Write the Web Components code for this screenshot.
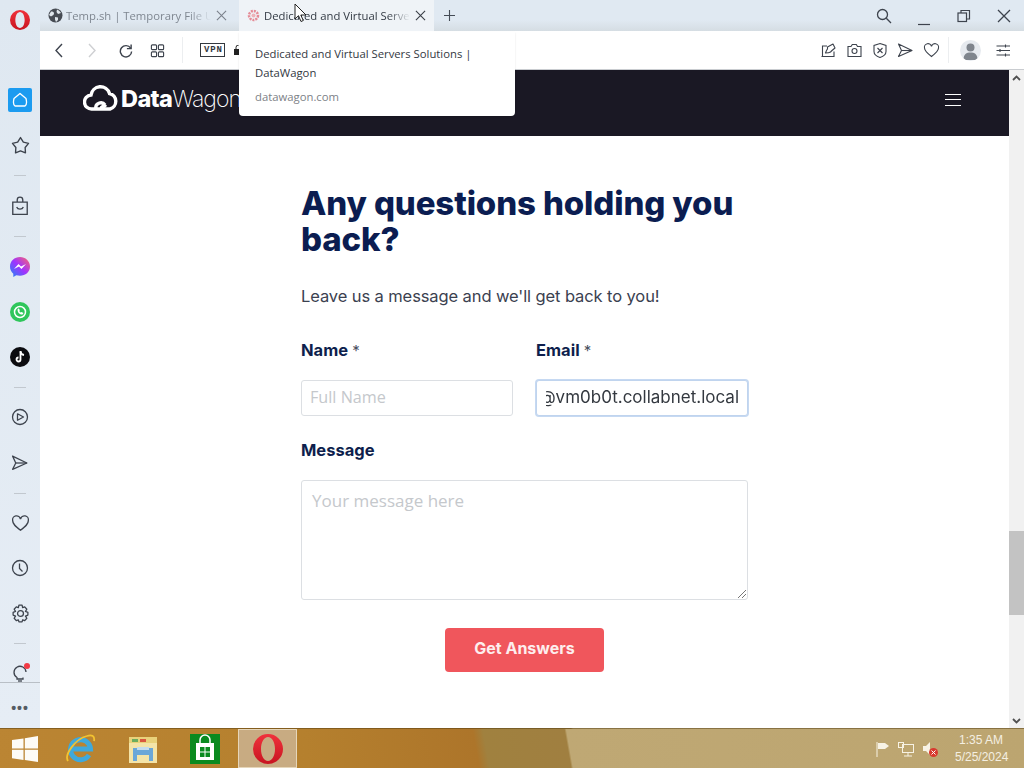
<!DOCTYPE html>
<html>
<head>
<meta charset="utf-8">
<title>DataWagon</title>
<style>
  html, body { margin: 0; height: 100%; overflow: hidden; font-family: "Open Sans", sans-serif; }
</style>
</head>
<body>
<browser-window></browser-window>

<script>
// small helper so every component gets an open shadow root the same way
class Base extends HTMLElement {
  constructor() {
    super();
    this.shadowDOM = this.attachShadow({ mode: "open" });
  }
  connectedCallback() {
    this.render();
  }
}

const ICONS = {
  back: `<path d="M10 2 4 8.500 10 15"/>`,
  forward: `<path d="M5 2l6 6.500L5 15"/>`,
  reload: `<path d="M13.500 5.500A6 6 0 1 0 14.500 9"/><path d="M14 1.500v4.500H9.500" />`,
  tabs: `<rect x="1.500" y="2" width="5.500" height="5" rx="1"/><rect x="9" y="2" width="5.500" height="5" rx="1"/><rect x="1.500" y="9.500" width="5.500" height="5" rx="1"/><rect x="9" y="9.500" width="5.500" height="5" rx="1"/>`,
  snap: `<path d="M7 4H2.500v10.500"/><path d="M14 9.500v5H1.500"/><path d="M5.500 11c.6-1.800 1-3 2-4.200L7.500 5 13 2l2 4-3 2.500-1.500 1.500C9 11 7.500 11 5.500 11z" stroke-linejoin="round"/>`,
  camera: `<path d="M2 4.500h3l1.300-2h4L11.500 4.500H15v10H2z"/><circle cx="8.500" cy="9" r="2.500"/>`,
  shield: `<path d="M8 1.500 14 3.500v6c0 3-3 5-6 6-3-1-6-3-6-6v-6z"/><path d="M5.500 6 10.500 11M10.500 6 5.500 11"/>`,
  send: `<path d="M1.500 2 15 8.500 1.500 14.500 4.500 8.500z" stroke-linejoin="round"/><path d="M4.500 8.500H15"/>`,
  heart: `<path d="M8.500 14.500C4 11 1.500 9 1.500 6A3.500 3.500 0 0 1 8.500 4.500 3.500 3.500 0 0 1 15.500 6c0 3-2.500 5-7 8.500z"/>`,
  easy: `<path d="M1.500 4H15M1.500 8.500H15M1.500 13H15"/><path d="M10.500 2.500v3M5 7v3M10.500 11.500v3"/>`,
  star: `<path d="M9 1.500 11.700 5.800 16.600 7 13.400 10.900 13.700 16 9 14.100 4.300 16 4.600 10.900 1.400 7 6.300 5.800z" stroke-linejoin="round"/>`,
  bag: `<path d="M2.500 5.500h13v11h-13z"/><path d="M6.500 5.500V3.500a2.500 2.500 0 0 1 5 0v2"/><path d="M6 10c1 2.500 5 2.500 6 0"/>`,
  play: `<circle cx="9" cy="9" r="7.500"/><path d="M6.500 5.800 12.500 9 6.500 12.200z" stroke-linejoin="round"/>`,
  clock: `<circle cx="9" cy="9" r="7.500"/><path d="M8.500 4.500V9.500l3 3"/>`,
  gear: `<path d="M7.500 1.500h3l.5 2.500 2-.8 2 2.300-1.300 2 2.300 1v2.500l-2.300 1 1.300 2-2 2.300-2-.8-.5 2h-3l-.5-2-2 .8-2-2.300 1.300-2-2.300-1V8.500l2.300-1-1.300-2 2-2.300 2 .8z" transform="translate(0 -.5)" stroke-linejoin="round"/><circle cx="9" cy="9" r="2.800"/>`,
  bulb: `<path d="M15 8A6 6 0 1 0 6 13.500V15h6v-1.500"/><path d="M7 17h4"/>`
};

function icon(name, size, view, width) {
  return `<svg width="${size}" height="${size}" viewBox="0 0 ${view} ${view}" fill="none" stroke="#3d434d" stroke-width="${width || 1.200}">${ICONS[name]}</svg>`;
}

// the opera "O": a round face with a tall narrow counter
function operaMark(size, id) {
  return `<svg width="${size}" height="${size}" viewBox="0 0 30 30">
    <defs><linearGradient id="${id}" x1="0" y1="0" x2="0" y2="1"><stop offset="0" stop-color="#f0323c"/><stop offset="1" stop-color="#c81420"/></linearGradient></defs>
    <path fill="url(#${id})" fill-rule="evenodd" d="M15 0a15 15 0 1 0 0 30 15 15 0 1 0 0-30zM15 3c4 0 7 5.400 7 12s-3 12-7 12-7-5.400-7-12 3-12 7-12z"/>
  </svg>`;
}

class OperaTab extends Base {
  render() {
    const active = this.hasAttribute("active");
    this.shadowDOM.innerHTML = `
      <style>
        :host {
          display: flex;
          align-items: center;
          width: 194px;
          height: 31px;
          box-sizing: border-box;
          padding: 0 8px 1px 7px;
          background: ${active ? "#eff3f7" : "transparent"};
          font-size: 11.300px;
          color: ${active ? "#333a44" : "#7f8791"};
        }
        .fav { flex: none; width: 15px; height: 15px; margin-right: 3px; }
        .label {
          flex: 1;
          min-width: 0;
          white-space: nowrap;
          overflow: hidden;
          -webkit-mask-image: linear-gradient(90deg, #000 85%, transparent);
          mask-image: linear-gradient(90deg, #000 85%, transparent);
        }
        .close { flex: none; width: 11px; height: 11px; margin-left: 5px; }
      </style>
      <span class="fav"><slot name="fav"></slot></span>
      <span class="label"><slot></slot></span>
      <svg class="close" viewBox="0 0 12 12" fill="none" stroke="${active ? "#3a3f47" : "#7b828c"}" stroke-width="1.200"><path d="M1 1l10 10M11 1 1 11"/></svg>
    `;
  }
}
customElements.define("opera-tab", OperaTab);

class TabStrip extends Base {
  render() {
    this.shadowDOM.innerHTML = `
      <style>
        :host {
          display: flex;
          align-items: stretch;
          height: 31px;
          padding-left: 1px;
          background: linear-gradient(#e0e9f2 65%, #d5dde3);
        }
        opera-tab[active] { margin-left: 4px; width: 195px; }
        .plus { width: 30px; display: flex; align-items: center; justify-content: center; }
        .spacer { flex: 1; }
        .ctl { display: flex; align-items: center; }
        .ctl svg { display: block; }
        .ctl span { display: flex; width: 40px; justify-content: center; }
      </style>
      <opera-tab>
        <svg slot="fav" width="15" height="15" viewBox="0 0 15 15"><circle cx="7.500" cy="7.500" r="7" fill="#474c54"/><path d="M3 3.500c2 0 3 .5 3 2s-1.500 2-3 3L1 7zM9 1.500c2 1 3 2 4 3.500l-3 1-1.500-2zM7 9l3 .5 0 2.500-2 2-1-2.500z" fill="#dfe6ec"/></svg>
        Temp.sh | Temporary File Upload
      </opera-tab>
      <opera-tab active>
        <svg slot="fav" width="15" height="15" viewBox="0 0 15 15"><circle cx="7.500" cy="7.500" r="4.500" fill="none" stroke="#e58b96" stroke-width="2.500" stroke-dasharray="2 1"/><circle cx="7.500" cy="7.500" r="2" fill="#eeb2b8"/></svg>
        Dedicated and Virtual Servers Solutions
      </opera-tab>
      <div class="plus">
        <svg width="13" height="13" viewBox="0 0 13 13" stroke="#444b55" stroke-width="1.100"><path d="M6.500 1v11M1 6.500h11"/></svg>
      </div>
      <div class="spacer"></div>
      <div class="ctl">
        <span><svg width="16" height="16" viewBox="0 0 16 16" fill="none" stroke="#3d434d" stroke-width="1.300"><circle cx="6.500" cy="6.500" r="5"/><path d="M10.300 10.300 15 15"/></svg></span>
        <span><svg width="14" height="14" viewBox="0 0 14 14" stroke="#3d434d" stroke-width="1.200" style="margin-top:6px"><path d="M1 12.500h12"/></svg></span>
        <span><svg width="14" height="14" viewBox="0 0 14 14" fill="none" stroke="#3d434d" stroke-width="1.200"><rect x="1" y="4" width="8.500" height="8.500"/><path d="M4 4V1.500h8.500V10H9.500"/></svg></span>
        <span><svg width="14" height="14" viewBox="0 0 14 14" stroke="#3d434d" stroke-width="1.300"><path d="M1 1l12 12M13 1 1 13"/></svg></span>
      </div>
    `;
  }
}
customElements.define("tab-strip", TabStrip);

class ToolBar extends Base {
  render() {
    this.shadowDOM.innerHTML = `
      <style>
        :host {
          display: flex;
          align-items: center;
          height: 39px;
          box-sizing: border-box;
          background: #fff;
          border-bottom: 1px solid #c9ccd0;
          padding-left: 12px;
        }
        .nav { display: flex; align-items: center; width: 130px; }
        .nav span { display: flex; width: 33.500px; }
        .nav span.sm { padding-left: 1px; width: 32.500px; }
        .sep { width: 1px; height: 26px; background: #eceef0; flex: none; }
        .vpn {
          font: 700 9px/1 "Liberation Mono", monospace;
          letter-spacing: .8px;
          color: #33383f;
          border: 1px solid #33383f;
          padding: 2px 1px 1px 3px;
          margin-left: 17px;
        }
        .lock { width: 9px; height: 10px; margin-left: 9px; }
        .spacer { flex: 1; }
        .tools { display: flex; align-items: center; gap: 9px; margin-right: 8px; }
        .tools svg { display: block; }
        .avatar { width: 21px; height: 21px; border-radius: 50%; background: #e6eaef; overflow: hidden; display: block; margin: 0 14px 0 11px; }
      </style>
      <div class="nav">
        <span>${icon("back", 17, 17, 1.400)}</span>
        <span style="opacity:.25">${icon("forward", 17, 17, 1.400)}</span>
        <span class="sm">${icon("reload", 15, 16, 1.500)}</span>
        <span class="sm">${icon("tabs", 15, 16, 1.200)}</span>
      </div>
      <div class="sep"></div>
      <span class="vpn">VPN</span>
      <svg class="lock" viewBox="0 0 9 10"><path d="M0 4h9v6H0z" fill="#222"/><path d="M2 4V2.500a2.500 2.500 0 0 1 5 0V4" fill="none" stroke="#222"/></svg>
      <div class="spacer"></div>
      <div class="tools">
        ${icon("snap", 17, 17, 1.100)}
        ${icon("camera", 17, 17, 1.100)}
        ${icon("shield", 16, 16, 1.100)}
        ${icon("send", 17, 17, 1.100)}
        ${icon("heart", 17, 17, 1.100)}
      </div>
      <div class="sep"></div>
      <svg class="avatar" viewBox="0 0 21 21"><circle cx="10.500" cy="7.500" r="4" fill="#7f858d"/><path d="M3.500 20c0-6 3-7.500 7-7.500s7 1.500 7 7.500z" fill="#7f858d"/></svg>
      <div style="margin-right:13px;display:flex">${icon("easy", 16, 16, 1.100)}</div>
    `;
  }
}
customElements.define("tool-bar", ToolBar);

class SideRail extends Base {
  render() {
    const dash = `<div class="gap"><i></i></div>`;
    this.shadowDOM.innerHTML = `
      <style>
        :host {
          display: flex;
          flex-direction: column;
          align-items: center;
          width: 40px;
          flex: none;
          background: linear-gradient(#dfe8f1, #e6edf5);
        }
        .logo { height: 88px; padding-top: 10px; box-sizing: border-box; }
        .home {
          width: 24px; height: 24px; background: #1b9bf0; border-radius: 2px;
          display: flex; align-items: center; justify-content: center;
        }
        .it { height: 24px; width: 24px; display: flex; align-items: center; justify-content: center; flex: none; }
        .far { margin-top: 21px; }
        .gap { height: 36px; display: flex; align-items: center; flex: none; }
        .gap i { display: block; width: 12px; height: 1px; background: #c2c8cf; }
        svg { display: block; }
        .bulb { position: relative; }
        .dot { position: absolute; width: 6px; height: 6px; background: #f23a45; border-radius: 50%; top: 2px; right: 2px; }
        .line { align-self: stretch; height: 1px; background: #b9bfc6; margin-top: -3px; position: relative; }
        .more { color: #555b63; font: 700 14px/1 "Liberation Sans", sans-serif; letter-spacing: 1px; margin-top: 13px; }
      </style>
      <div class="logo">${operaMark(20, "railO")}</div>
      <div class="home"><svg width="16" height="16" viewBox="0 0 16 16" fill="none" stroke="#fff" stroke-width="1.300"><path d="M8 1.500 14 6.500c1 4 .5 6.500-1 7.500H3c-1.500-1-2-3.500-1-7.500z" stroke-linejoin="round"/></svg></div>
      <div class="it far">${icon("star", 19, 18, 1.300)}</div>
      ${dash}
      <div class="it" style="margin-top:1px">${icon("bag", 20, 18, 1.200)}</div>
      ${dash}
      <div class="it" style="margin-top:1px">
        <svg width="20" height="20" viewBox="0 0 20 20"><defs><linearGradient id="m" x1="0" y1="1" x2="1" y2="0"><stop offset="0" stop-color="#1e88f5"/><stop offset=".5" stop-color="#a033ff"/><stop offset="1" stop-color="#ff6968"/></linearGradient></defs><path d="M10 0C4.500 0 0 4 0 9.500c0 3 1.200 5.500 3.300 7.200V20l3-1.700c1.200.3 2.400.5 3.700.5 5.500 0 10-4 10-9.300S15.500 0 10 0z" fill="url(#m)"/><path d="M4 12l4.500-5 2.500 2.500L16 7l-4.500 5L9 9.500z" fill="#fff"/></svg>
      </div>
      <div class="it far">
        <svg width="20" height="20" viewBox="0 0 20 20"><circle cx="10" cy="10" r="10" fill="#2fc65b"/><circle cx="10" cy="10" r="5.500" fill="none" stroke="#fff" stroke-width="1.500"/><path d="M7.500 7.500c0 3 2 5 5 5l1-1.500-2-1-1 .5-1.200-1.200.5-1-1-2z" fill="#fff"/></svg>
      </div>
      <div class="it far">
        <svg width="20" height="20" viewBox="0 0 20 20"><circle cx="10" cy="10" r="10" fill="#0c0c10"/><path d="M10.500 4v8.500a2 2 0 1 1-2-2" fill="none" stroke="#fff" stroke-width="1.800"/><path d="M10.500 4.500c.3 2 1.500 3.200 3.500 3.500" fill="none" stroke="#fff" stroke-width="1.800"/></svg>
      </div>
      ${dash}
      <div class="it">${icon("play", 18, 18, 1.300)}</div>
      <div class="it" style="margin-top:22px">${icon("send", 18, 17, 1.200)}</div>
      ${dash}
      <div class="it">${icon("heart", 19, 17, 1.200)}</div>
      <div class="it far">${icon("clock", 18, 18, 1.300)}</div>
      <div class="it far">${icon("gear", 19, 18, 1.200)}</div>
      ${dash}
      <div class="it bulb">${icon("bulb", 18, 18, 1.300)}<i class="dot"></i></div>
      <div class="line"></div>
      <div class="it more">•••</div>
    `;
  }
}
customElements.define("side-rail", SideRail);

class SiteHeader extends Base {
  render() {
    this.shadowDOM.innerHTML = `
      <style>
        :host {
          display: flex;
          align-items: center;
          justify-content: space-between;
          height: 66px;
          background: #1a1824;
          padding: 0 48px 0 43px;
          color: #fff;
        }
        .brand { display: flex; align-items: center; gap: 2px; margin-top: -10px; font-family: Inter, sans-serif; white-space: nowrap; }
        b { font-size: 23.500px; font-weight: 800; letter-spacing: -.6px; }
        .thin { font-size: 23px; font-weight: 200; letter-spacing: -1px; }
        .burger { width: 16px; height: 10px; border-top: 1px solid #fff; border-bottom: 1px solid #fff; position: relative; margin-top: -6px; }
        .burger::after { content: ""; position: absolute; left: 0; right: 0; top: 4px; height: 1px; background: #fff; }
      </style>
      <div class="brand">
        <svg width="36" height="28" viewBox="0 0 36 28" fill="none" stroke="#fff" stroke-width="3.400"><path d="M9 25a7 7 0 0 1-1-14 9.500 9.500 0 0 1 18.500-1.500A8 8 0 0 1 27 25z"/><path d="M13 25a5 5 0 0 1 9-4M18 25a3 3 0 0 1 5-2"/></svg>
        <span><b>Data</b><span class="thin">Wagon</span></span>
      </div>
      <div class="burger"></div>
    `;
  }
}
customElements.define("site-header", SiteHeader);

class FormField extends Base {
  render() {
    const required = this.hasAttribute("required") ? `<span class="req"> *</span>` : "";
    this.shadowDOM.innerHTML = `
      <style>
        :host { display: flex; flex-direction: column; font-family: Inter, sans-serif; min-width: 0; }
        label { height: 20px; font-size: 16.500px; line-height: 20px; font-weight: 700; color: #0e1f4d; margin-bottom: 20px; }
        .req { font-weight: 400; font-size: 15px; color: #4a5060; }
      </style>
      <label>${this.getAttribute("label")}${required}</label>
      <slot></slot>
    `;
  }
}
customElements.define("form-field", FormField);

class TextBox extends Base {
  render() {
    const focused = this.hasAttribute("focused");
    const multi = this.hasAttribute("multi");
    const value = this.getAttribute("value");
    this.shadowDOM.innerHTML = `
      <style>
        :host {
          display: flex;
          align-items: ${multi ? "flex-start" : "center"};
          justify-content: ${focused ? "flex-end" : "flex-start"};
          box-sizing: border-box;
          height: ${this.getAttribute("h") || 36}px;
          padding: ${multi ? "10px" : "0 8px 2px"};
          border: 1px solid #dcdfe3;
          border-radius: 3px;
          background: #fff;
          font: ${multi ? "17px" : "16.200px"}/20px "Open Sans", sans-serif;
          position: relative;
          white-space: nowrap;
          ${focused ? "border-color:#c0d4ee; box-shadow: 0 0 0 1px #c6d9f2;" : ""}
        }
        .ph { color: #c5c8cc; }
        /* the caret has scrolled the address left, so only part of the @ still shows */
        .val {
          color: #33383f;
          font-family: Inter, sans-serif;
          font-size: 17px;
          -webkit-mask-image: linear-gradient(90deg, transparent 7px, #000 7px);
          mask-image: linear-gradient(90deg, transparent 7px, #000 7px);
        }
        svg { position: absolute; right: 1px; bottom: 1px; }
      </style>
      ${value ? `<span class="val">${value}</span>` : `<span class="ph">${this.getAttribute("placeholder")}</span>`}
      ${multi ? `<svg width="8" height="8" viewBox="0 0 8 8" stroke="#777"><path d="M0 8l8-8M4 8l4-4"/></svg>` : ""}
    `;
  }
}
customElements.define("text-box", TextBox);

class ContactForm extends Base {
  render() {
    this.shadowDOM.innerHTML = `
      <style>
        :host { display: block; width: 447px; margin-left: 261px; padding-top: 49px; font-family: Inter, sans-serif; }
        h2 { margin: 0; font-size: 33px; line-height: 36px; font-weight: 800; letter-spacing: -.12px; color: #0b1d51; }
        p { margin: 26px 0 0; font-size: 16.500px; letter-spacing: -.1px; line-height: 26px; color: #3b4150; }
        .row { display: grid; grid-template-columns: 212px 212px; gap: 23px; margin-top: 31px; }
        .msg { margin-top: 24px; }
        .btn {
          display: block;
          width: 159px; height: 44px;
          margin: 28px auto 0;
          border-radius: 4px;
          background: #f0565c;
          color: #fdeeee;
          font: 700 16px/40px Inter, sans-serif;
          text-align: center;
        }
      </style>
      <h2>Any questions holding you back?</h2>
      <p>Leave us a message and we'll get back to you!</p>
      <div class="row">
        <form-field label="Name" required><text-box placeholder="Full Name"></text-box></form-field>
        <form-field label="Email" required><text-box focused value="@vm0b0t.collabnet.local"></text-box></form-field>
      </div>
      <form-field class="msg" label="Message"><text-box multi h="120" placeholder="Your message here"></text-box></form-field>
      <div class="btn">Get Answers</div>
    `;
  }
}
customElements.define("contact-form", ContactForm);

class PageScroll extends Base {
  render() {
    this.shadowDOM.innerHTML = `
      <style>
        :host { display: flex; flex-direction: column; width: 15px; flex: none; background: #f1f1f1; position: relative; }
        .arrow { height: 15px; display: flex; align-items: center; justify-content: center; }
        .track { flex: 1; position: relative; }
        .thumb { position: absolute; left: 0; right: 0; top: 446px; height: 84px; background: #c3c3c3; }
      </style>
      <div class="arrow"><svg width="9" height="6" viewBox="0 0 9 6" fill="none" stroke="#505050" stroke-width="1.800"><path d="M1 5l3.500-3.500L8 5"/></svg></div>
      <div class="track"><div class="thumb"></div></div>
      <div class="arrow"><svg width="9" height="6" viewBox="0 0 9 6" fill="none" stroke="#505050" stroke-width="1.800"><path d="M1 1l3.500 3.500L8 1"/></svg></div>
    `;
  }
}
customElements.define("page-scroll", PageScroll);

class TabTooltip extends Base {
  render() {
    this.shadowDOM.innerHTML = `
      <style>
        :host {
          position: absolute;
          left: 239px; top: 32px;
          width: 276px; height: 84px;
          box-sizing: border-box;
          padding: 12px 16px;
          background: #fff;
          border-radius: 0 0 4px 4px;
          box-shadow: 0 1px 2px rgba(0,0,0,.12);
          font: 11.300px/19px "Open Sans", sans-serif;
          color: #33383f;
        }
        .host { margin-top: 5px; color: #7d8187; font-size: 11.300px; }
      </style>
      <div>Dedicated and Virtual Servers Solutions | DataWagon</div>
      <div class="host">datawagon.com</div>
    `;
  }
}
customElements.define("tab-tooltip", TabTooltip);

class WinTaskbar extends Base {
  render() {
    this.shadowDOM.innerHTML = `
      <style>
        :host {
          display: flex;
          align-items: center;
          height: 40px;
          flex: none;
          box-sizing: border-box;
          border-top: 1px solid rgba(70, 50, 10, .45);
          background: linear-gradient(80deg, #bb8533 0, #b5802e 30%, #ad752a 46.500%, #a0813f 47.500%, #a07f40 55.400%, #bfa874 55.600%, #bca570 100%);
          color: #f4efe2;
          font: 12px/17px "Liberation Sans", sans-serif;
        }
        .start { width: 50px; display: flex; justify-content: center; }
        .app { width: 62px; height: 39px; display: flex; align-items: center; justify-content: center; box-sizing: border-box; }
        .app.on { width: 59px; margin-left: 2px; background: #c8ab82; border: 1px solid #e6d6ba; }
        .spacer { flex: 1; }
        .tray { display: flex; align-items: center; gap: 6px; }
        .clock { text-align: center; margin-right: 17px; margin-left: 16px; width: 52px; padding-top: 1px; }
      </style>
      <div class="start">
        <svg width="26" height="26" viewBox="0 0 26 26" fill="#fdfbf6"><path d="M0 4 11.500 2.400V12.500H0zM12.800 2.200 26 0v12.500H12.800zM0 13.800h11.500V24L0 22.300zM12.800 13.800H26V26L12.800 24z"/></svg>
      </div>
      <div class="app">
        <svg width="32" height="32" viewBox="0 0 32 32" fill="none"><path d="M24 22A10 10 0 1 1 25.500 16H8" stroke="#3fa9dc" stroke-width="5"/><path d="M3 28C-1 22 10 6 22 3c5-1.500 8 0 7 5" stroke="#f2c230" stroke-width="1.800"/></svg>
      </div>
      <div class="app">
        <svg width="32" height="32" viewBox="0 0 32 32"><path d="M2 4h28v26H2z" fill="#f4e4a8"/><path d="M2 4h28v6H2z" fill="#e9d27b"/><rect x="5" y="6" width="6" height="3" fill="#6cad5f"/><rect x="13" y="6" width="6" height="3" fill="#d9573f"/><path d="M6 15h20v13h-4v-6H10v6H6z" fill="#6ba7d8"/><path d="M10 14h12v3H10z" fill="#c5dcec"/></svg>
      </div>
      <div class="app">
        <svg width="30" height="30" viewBox="0 0 30 30"><path d="M0 0h30v30H0z" fill="#0b8a1f"/><path d="M6 9h18v17H6z" fill="#fff"/><path d="M10 9V6a5 5 0 0 1 10 0v3" fill="none" stroke="#fff" stroke-width="1.500"/><path d="M10 13h4.500v4.500H10zM15.500 13H20v4.500h-4.500zM10 18.500h4.500V23H10zM15.500 18.500H20V23h-4.500z" fill="#0b8a1f"/></svg>
      </div>
      <div class="app on">${operaMark(30, "barO")}</div>
      <div class="spacer"></div>
      <div class="tray">
        <svg width="16" height="16" viewBox="0 0 16 16"><path d="M2 1v15" stroke="#f7f2e4"/><path d="M3 2h7l4 3-4 3H3z" fill="#f7f2e4"/></svg>
        <svg width="18" height="16" viewBox="0 0 18 16" fill="none" stroke="#f7f2e4"><rect x="5.500" y="3.500" width="11" height="8"/><rect x="1.500" y="1.500" width="5" height="5"/><path d="M11 12v3M7 15h8"/></svg>
        <svg width="18" height="18" viewBox="0 0 18 18"><path d="M2 6h3l4-4v13l-4-4H2z" fill="#f7f2e4"/><circle cx="12.500" cy="12.500" r="4.500" fill="#d8392f"/><path d="M10.500 10.500l4 4M14.500 10.500l-4 4" stroke="#fff"/></svg>
      </div>
      <div class="clock">1:35 AM<br>5/25/2024</div>
    `;
  }
}
customElements.define("win-taskbar", WinTaskbar);

class BrowserWindow extends Base {
  render() {
    this.shadowDOM.innerHTML = `
      <style>
        :host { display: flex; flex-direction: column; width: 1024px; height: 768px; position: relative; overflow: hidden; }
        .body { flex: 1; min-height: 0; display: flex; }
        .main { flex: 1; min-width: 0; display: flex; flex-direction: column; }
        .view { flex: 1; min-height: 0; display: flex; }
        .page { flex: 1; min-width: 0; background: #fff; overflow: hidden; }
        .cursor { position: absolute; left: 294px; top: 3px; }
      </style>
      <div class="body">
        <side-rail></side-rail>
        <div class="main">
          <tab-strip></tab-strip>
          <tool-bar></tool-bar>
          <div class="view">
            <div class="page">
              <site-header></site-header>
              <contact-form></contact-form>
            </div>
            <page-scroll></page-scroll>
          </div>
        </div>
      </div>
      <win-taskbar></win-taskbar>
      <tab-tooltip></tab-tooltip>
      <svg class="cursor" width="13" height="20" viewBox="0 0 13 20"><path d="M1 1v15l3.500-3.300 2.500 5.800 2.300-1-2.500-5.500H12z" fill="#fff" stroke="#222"/></svg>
    `;
  }
}
customElements.define("browser-window", BrowserWindow);
</script>
</body>
</html>
